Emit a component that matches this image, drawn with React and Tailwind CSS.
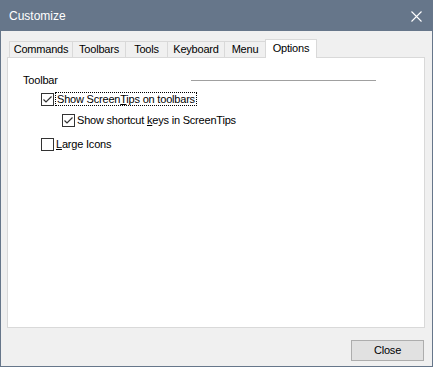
const font = { fontFamily: '"Liberation Sans", Arial, sans-serif' };

const tabs = [
  { label: 'Commands', w: 'w-[63px]' },
  { label: 'Toolbars', w: 'w-[53px]' },
  { label: 'Tools', w: 'w-[42px]' },
  { label: 'Keyboard', w: 'w-[57px]' },
  { label: 'Menu', w: 'w-[41px]' },
];

const Check = ({ checked }) => (
  <div className="w-[13px] h-[13px] border border-[#333] bg-white flex items-center justify-center shrink-0">
    {checked && (
      <svg width="11" height="11" viewBox="0 0 11 11">
        <polyline points="1.5,5.5 4,8 9.5,2.5" fill="none" stroke="#333" strokeWidth="1.2" />
      </svg>
    )}
  </div>
);

export default function App() {
  return (
    <div className="w-[433px] h-[367px] flex flex-col border border-[#66768a] bg-[#f0f0f0] text-[11px] tracking-[-0.2px] text-black" style={font}>
      <div className="h-[30px] bg-[#66768a] flex items-center justify-between pl-[8px] pr-[10px] shrink-0">
        <span className="text-white text-[12px] tracking-normal">Customize</span>
        <svg width="11" height="11" viewBox="0 0 11 11">
          <path d="M0.5 0.5 L10.5 10.5 M10.5 0.5 L0.5 10.5" stroke="#fff" strokeWidth="1.1" />
        </svg>
      </div>

      <div className="flex-1 flex flex-col pt-[8px] px-[6px]">
        <div className="flex items-end pl-[2px] h-[18px]">
          {tabs.map((t) => (
            <div
              key={t.label}
              className={`${t.w} h-[16px] border-l border-t border-[#d9d9d9] flex items-center justify-center leading-none`}
            >
              {t.label}
            </div>
          ))}
          <div className="w-[52px] h-[19px] -mb-px border border-b-0 border-[#d9d9d9] bg-white flex items-center justify-center leading-none pb-[2px] z-10">
            Options
          </div>
        </div>

        <div className="w-[418px] h-[271px] border border-[#d9d9d9] bg-white pt-[15px]">
          <div className="flex items-center pl-[15px] h-[14px]">
            <span className="w-[168px]">Toolbar</span>
            <div className="w-[185px] h-px bg-[#a0a0a0]" />
          </div>
          <div className="flex items-center pl-[33px] mt-[5px] h-[14px]">
            <Check checked />
            <span className="ml-[1px] px-[1px] h-[14px] leading-[13px] border border-dotted border-black">
              Show Screen<u>T</u>ips on toolbars
            </span>
          </div>
          <div className="flex items-center pl-[54px] mt-[7px] h-[14px]">
            <Check checked />
            <span className="ml-[2px]">
              Show shortcut <u>k</u>eys in ScreenTips
            </span>
          </div>
          <div className="flex items-center pl-[33px] mt-[10px] h-[14px]">
            <Check />
            <span className="ml-[2px]">
              <u>L</u>arge Icons
            </span>
          </div>
        </div>

        <div className="flex justify-end mt-[12px] pr-[2px]">
          <button className="w-[73px] h-[21px] border border-[#adadad] bg-[#e1e1e1] text-black leading-none">
            Close
          </button>
        </div>
      </div>
    </div>
  );
}
